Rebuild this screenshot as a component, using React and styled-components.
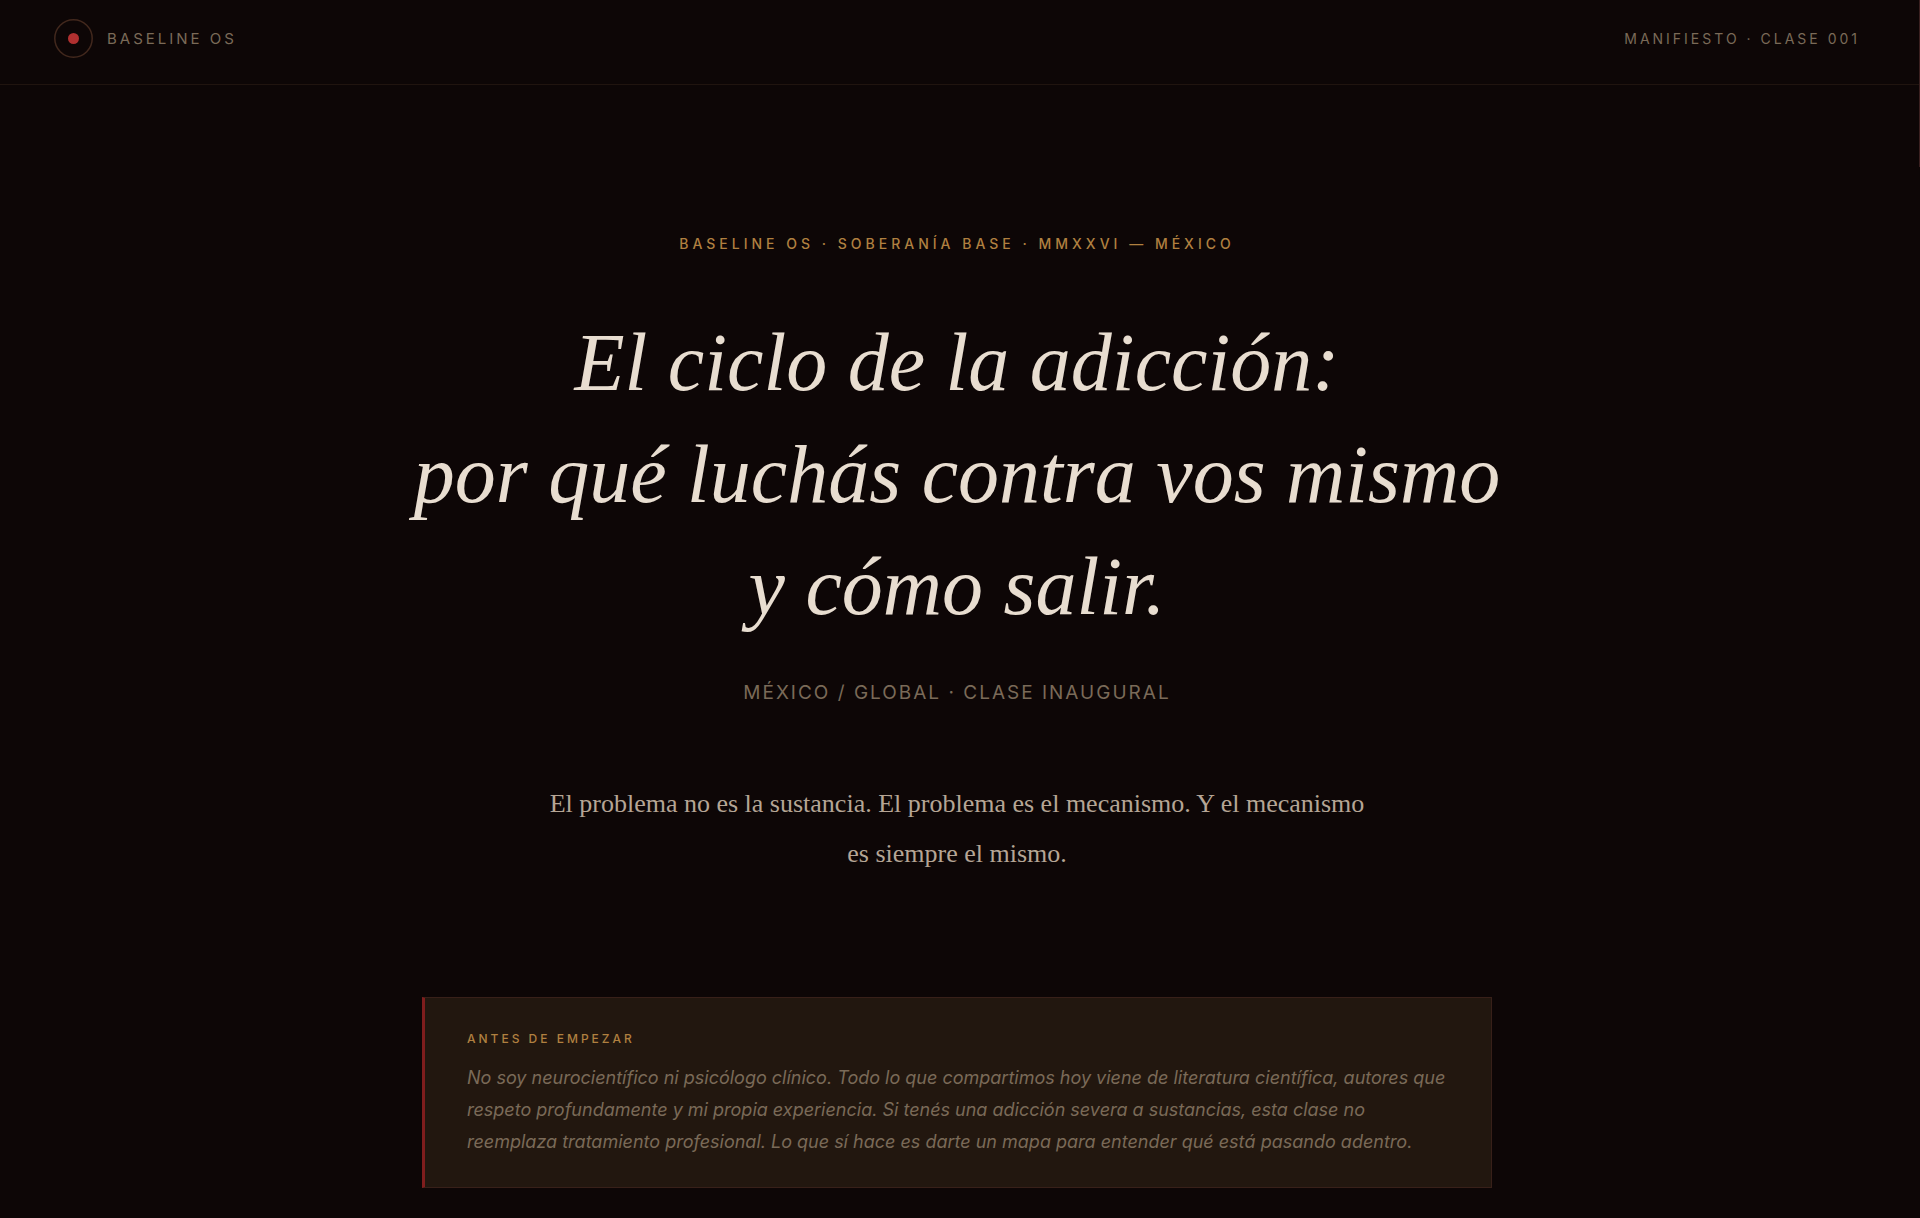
import React from "react";
import styled, { createGlobalStyle } from "styled-components";

const GlobalStyle = createGlobalStyle`
  * { box-sizing: border-box; margin: 0; }
  body {
    margin: 0;
    background: #0d0606;
    color: #e8ddd0;
    font-family: Inter, "Open Sans", sans-serif;
  }
`;

const serif = `"Liberation Serif", "Times New Roman", serif`;

const Page = styled.div`
  position: relative;
  min-height: 100vh;
`;

const ScrollThumb = styled.div`
  position: absolute;
  top: 0;
  right: 0;
  width: 1px;
  height: 167px;
  background: #3a2020;
`;

const TopBar = styled.header`
  display: flex;
  align-items: flex-start;
  justify-content: space-between;
  padding: 19px 60px 26px 54px;
  border-bottom: 1px solid #20140f;
`;

const Brand = styled.a`
  display: flex;
  align-items: center;
  gap: 14px;
  color: inherit;
  text-decoration: none;
`;

const Mark = styled.svg`
  display: block;
  width: 39px;
  height: 39px;
`;

const Label = styled.span`
  font-size: ${(p) => p.$size}px;
  line-height: 39px;
  letter-spacing: 3px;
  text-transform: uppercase;
  color: #7a6a58;
`;

const Hero = styled.main`
  display: flex;
  flex-direction: column;
  align-items: center;
  padding: 144px 6px 30px 0;
  text-align: center;
`;

const Eyebrow = styled.p`
  font-size: 14px;
  line-height: 30px;
  font-weight: 500;
  letter-spacing: 4px;
  text-transform: uppercase;
  color: #b08040;
`;

const Title = styled.h1`
  margin-top: 48px;
  font-family: ${serif};
  font-size: 82px;
  line-height: 112px;
  font-weight: 400;
  font-style: italic;
`;

const Line = styled.span`
  display: block;
`;

const Subtitle = styled.p`
  margin-top: 35px;
  font-size: 19px;
  line-height: 30px;
  letter-spacing: 2px;
  text-transform: uppercase;
  color: #7a6a58;
`;

const Lead = styled.p`
  max-width: 840px;
  margin-top: 71px;
  font-family: ${serif};
  font-size: 26px;
  line-height: 50px;
  color: #b5a595;
`;

const Notice = styled.aside`
  width: 100%;
  max-width: 1070px;
  margin-top: 118px;
  padding: 26px 40px 29px 42px;
  background: #22170f;
  border: 1px solid #382019;
  border-left: 3px solid #7f1d1d;
  text-align: left;
`;

const NoticeTitle = styled.h2`
  font-size: 12px;
  line-height: 30px;
  font-weight: 500;
  letter-spacing: 3px;
  text-transform: uppercase;
  color: #b08040;
`;

const NoticeText = styled.p`
  margin-top: 8px;
  font-size: 18px;
  line-height: 32px;
  font-style: italic;
  color: #7a6a58;
`;

export default function App() {
  return (
    <>
      <GlobalStyle />
      <Page>
        <TopBar>
          <Brand href="#inicio">
            <Mark viewBox="0 0 39 39" aria-hidden="true">
              <circle cx="19.5" cy="19.5" r="18.7" fill="none" stroke="#42281d" strokeWidth="1.5" />
              <circle cx="19.5" cy="19.5" r="5.5" fill="#b03030" />
            </Mark>
            <Label $size={15}>Baseline OS</Label>
          </Brand>
          <Label $size={14}>Manifiesto · Clase 001</Label>
        </TopBar>
        <Hero>
          <Eyebrow>Baseline OS · Soberanía Base · MMXXVI — México</Eyebrow>
          <Title>
            <Line>El ciclo de la adicción:</Line>
            <Line>por qué luchás contra vos mismo</Line>
            <Line>y cómo salir.</Line>
          </Title>
          <Subtitle>México / Global · Clase inaugural</Subtitle>
          <Lead>
            El problema no es la sustancia. El problema es el mecanismo. Y el mecanismo es siempre el
            mismo.
          </Lead>
          <Notice>
            <NoticeTitle>Antes de empezar</NoticeTitle>
            <NoticeText>
              No soy neurocientífico ni psicólogo clínico. Todo lo que compartimos hoy viene de
              literatura científica, autores que respeto profundamente y mi propia experiencia. Si
              tenés una adicción severa a sustancias, esta clase no reemplaza tratamiento
              profesional. Lo que sí hace es darte un mapa para entender qué está pasando adentro.
            </NoticeText>
          </Notice>
        </Hero>
        <ScrollThumb aria-hidden="true" />
      </Page>
    </>
  );
}
